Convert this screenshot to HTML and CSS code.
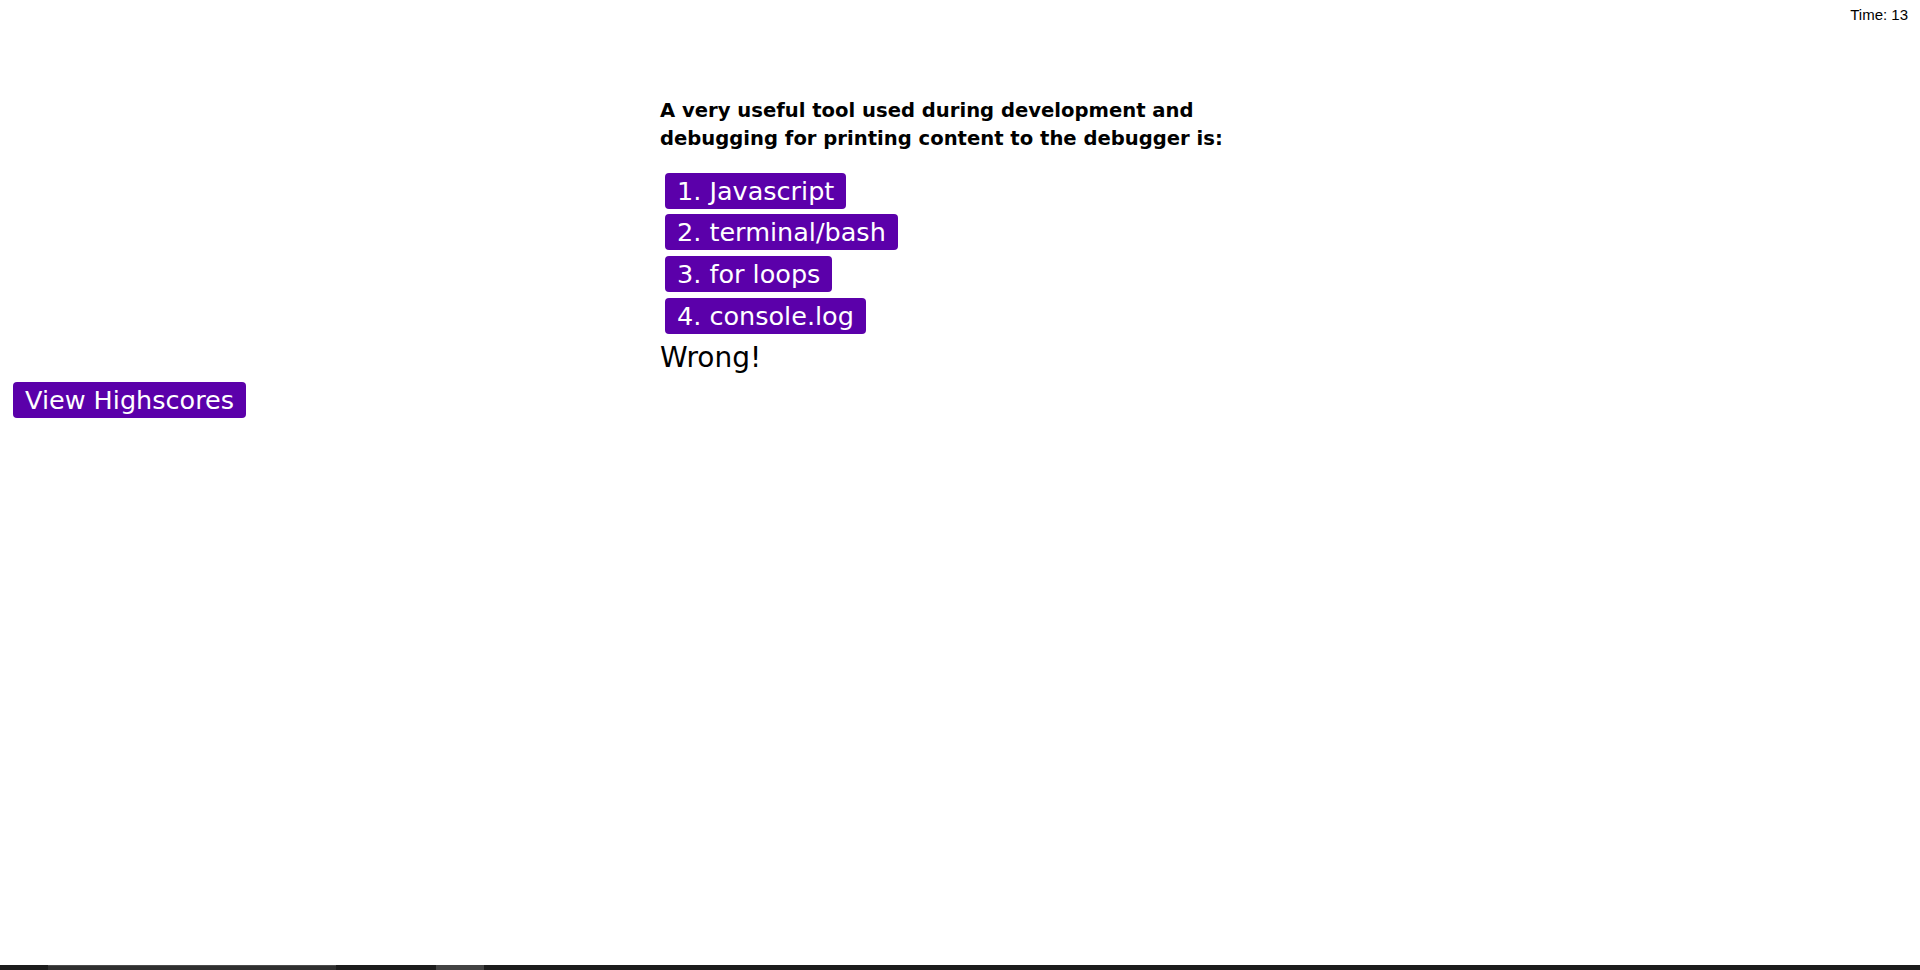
FILE: index.html
```html
<!DOCTYPE html>
<html lang="en">
<head>
<meta charset="utf-8">
<title>Code Quiz</title>
<link rel="stylesheet" href="styles.css">
</head>
<body>
<div class="page">
  <header class="topbar">
    <span class="timer">Time: 13</span>
  </header>
  <main class="quiz">
    <h2 class="question">A very useful tool used during development and debugging for printing content to the debugger is:</h2>
    <div class="choices">
      <button class="btn choice">1. Javascript</button>
      <button class="btn choice">2. terminal/bash</button>
      <button class="btn choice">3. for loops</button>
      <button class="btn choice">4. console.log</button>
    </div>
    <p class="feedback">Wrong!</p>
  </main>
  <div class="scores">
    <button class="btn">View Highscores</button>
  </div>
  <footer class="taskbar">
    <span class="tb-seg tb-a"></span>
    <span class="tb-seg tb-b"></span>
  </footer>
</div>
</body>
</html>
```

FILE: styles.css
```css
html, body {
  margin: 0;
  padding: 0;
  background: #ffffff;
}

.page {
  min-height: 970px;
  display: flex;
  flex-direction: column;
  font-family: "DejaVu Sans", "Liberation Sans", sans-serif;
  color: #000;
}

.topbar {
  display: flex;
  justify-content: flex-end;
  padding: 6px 12px 0 0;
  height: 24px;
}

.timer {
  font-family: "Liberation Sans", Arial, sans-serif;
  font-size: 15px;
  line-height: 17px;
}

.quiz {
  width: 600px;
  margin: 67px auto 0;
  display: flex;
  flex-direction: column;
  align-items: flex-start;
}

.question {
  margin: 0;
  font-size: 19.6px;
  line-height: 28px;
  font-weight: 700;
}

.choices {
  margin-top: 19.5px;
  display: flex;
  flex-direction: column;
  align-items: flex-start;
  gap: 5.75px;
  padding-left: 5px;
}

.btn {
  font-family: "DejaVu Sans", "Liberation Sans", sans-serif;
  font-size: 25.5px;
  line-height: 32px;
  padding: 2px 12px;
  border: 0;
  border-radius: 4px;
  background: #5b00aa;
  color: #ffffff;
  cursor: pointer;
}

.feedback {
  margin: 8.6px 0 0;
  font-size: 28px;
  line-height: 32px;
}

.scores {
  padding: 7.4px 0 0 13px;
}

.taskbar {
  margin-top: auto;
  height: 5px;
  background: #1c1c1c;
  display: flex;
  gap: 100px;
  padding-left: 48px;
}

.tb-seg {
  display: block;
  height: 5px;
}

.tb-a {
  width: 288px;
  background: #2f2f2f;
  box-shadow: inset 0 1px 0 #4a4a4a;
}

.tb-b {
  width: 48px;
  background: #434343;
}
```
